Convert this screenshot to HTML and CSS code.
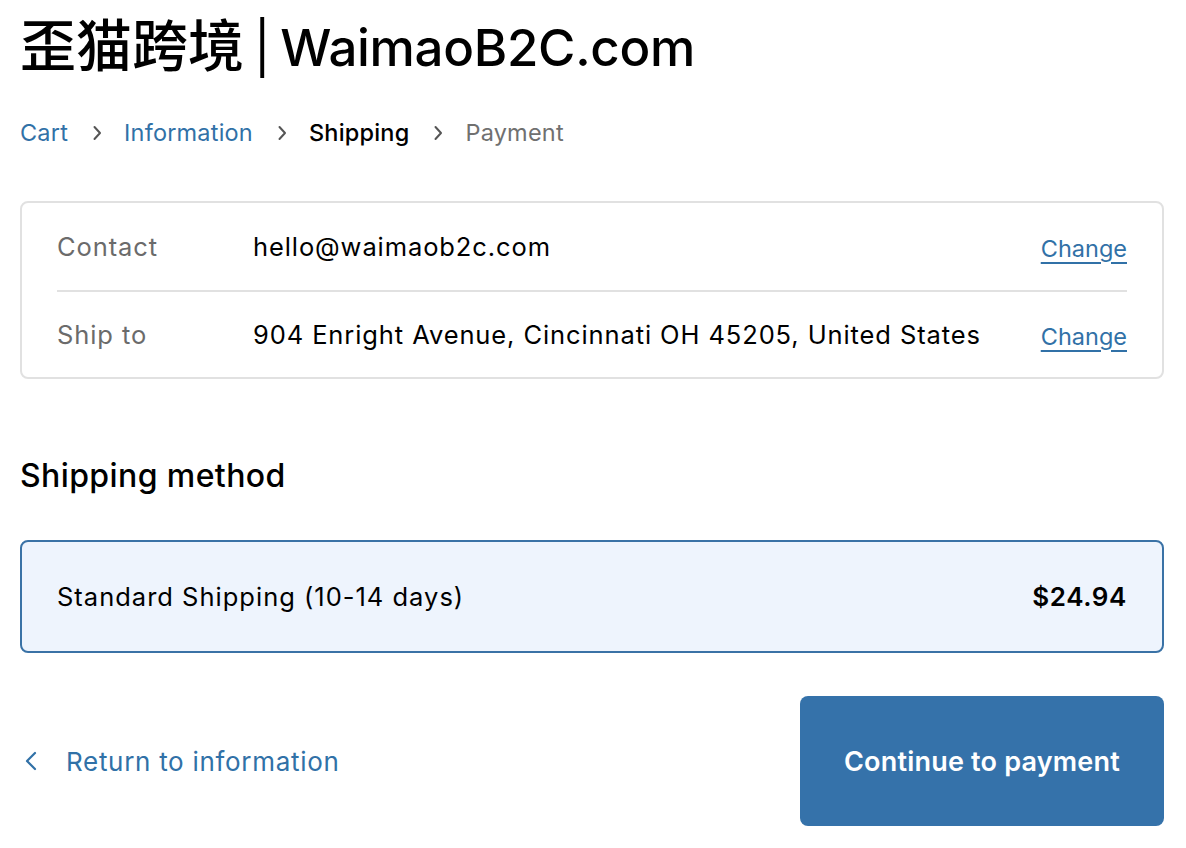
FILE: index.html
```html
<!DOCTYPE html>
<html lang="en">
<head>
<meta charset="utf-8">
<title>Shipping</title>
<link rel="stylesheet" href="styles.css">
</head>
<body>
<main class="page">
  <h1 class="title"><span class="title-cjk">歪猫跨境</span> <span class="title-pipe">|</span> WaimaoB2C.com</h1>
  <nav class="crumbs">
    <a class="crumb link" href="#">Cart</a>
    <svg class="sep" viewBox="0 0 10 16"><path d="M2.5 2l5.5 6-5.5 6" fill="none" stroke="currentColor" stroke-width="2" stroke-linecap="round" stroke-linejoin="round"/></svg>
    <a class="crumb link" href="#">Information</a>
    <svg class="sep" viewBox="0 0 10 16"><path d="M2.5 2l5.5 6-5.5 6" fill="none" stroke="currentColor" stroke-width="2" stroke-linecap="round" stroke-linejoin="round"/></svg>
    <span class="crumb current">Shipping</span>
    <svg class="sep" viewBox="0 0 10 16"><path d="M2.5 2l5.5 6-5.5 6" fill="none" stroke="currentColor" stroke-width="2" stroke-linecap="round" stroke-linejoin="round"/></svg>
    <span class="crumb muted">Payment</span>
  </nav>

  <section class="review">
    <div class="row">
      <span class="label">Contact</span>
      <span class="value">hello@waimaob2c.com</span>
      <a class="change" href="#">Change</a>
    </div>
    <div class="row">
      <span class="label">Ship to</span>
      <span class="value">904 Enright Avenue, Cincinnati OH 45205, United States</span>
      <a class="change" href="#">Change</a>
    </div>
  </section>

  <h2 class="heading">Shipping method</h2>

  <div class="method">
    <span class="method-name">Standard Shipping (10-14 days)</span>
    <span class="price">$24.94</span>
  </div>

  <div class="actions">
    <a class="back" href="#">
      <svg class="back-icon" viewBox="0 0 14 20"><path d="M11 2L3 10l8 8" fill="none" stroke="currentColor" stroke-width="2.2" stroke-linecap="round" stroke-linejoin="round"/></svg>
      <span>Return to information</span>
    </a>
    <button class="continue" type="button">Continue to payment</button>
  </div>
</main>
</body>
</html>
```

FILE: styles.css
```css
* { box-sizing: border-box; }
html, body { margin: 0; padding: 0; background: #fff; }
body {
  font-family: Inter, "Noto Sans CJK SC", "Noto Sans", sans-serif;
  color: #000;
}
.page {
  padding: 10px 22px 20px 20px;
}
.title {
  margin: 0;
  font-size: 51px;
  font-weight: 500;
  line-height: 72px;
  letter-spacing: -0.3px;
  word-spacing: -3.5px;
}
.title-cjk {
  font-size: 56px;
  letter-spacing: 0;
}
.title-pipe {
  font-weight: 400;
}
.crumbs {
  display: flex;
  align-items: center;
  margin-top: 31px;
  font-size: 23.5px;
  letter-spacing: 0.2px;
  line-height: 36px;
}
.crumb { text-decoration: none; }
.link { color: #3171a7; }
.current { color: #000; font-weight: 500; }
.muted { color: #707070; }
.sep {
  width: 10px;
  height: 16px;
  margin: 0 22px 0 24px;
  color: #555;
}
.review {
  margin-top: 50px;
  border: 2px solid #e1e1e1;
  border-radius: 8px;
  padding: 0 35px;
}
.row {
  display: flex;
  align-items: center;
  height: 87px;
  font-size: 25.5px;
  letter-spacing: 0.9px;
}
.row + .row { border-top: 2px solid #e1e1e1; }
.label { width: 196px; color: #6b6b6b; flex: none; }
.value { flex: 1; color: #000; }
.change {
  color: #3171a7;
  text-decoration: underline;
  text-underline-offset: 5px;
  text-decoration-thickness: 2px;
  font-size: 23.5px;
  letter-spacing: 0;
  margin-top: 3px;
}
.heading {
  margin: 76px 0 0;
  font-size: 32px;
  font-weight: 500;
  letter-spacing: 0.4px;
  line-height: 42px;
}
.method {
  margin-top: 43px;
  display: flex;
  justify-content: space-between;
  align-items: center;
  height: 113px;
  padding: 0 35px;
  background: #eef4fd;
  border: 2px solid #3a72a6;
  border-radius: 8px;
  font-size: 25.5px;
  letter-spacing: 1px;
}
.price { font-weight: 600; font-size: 26px; letter-spacing: 0.6px; }
.actions {
  margin-top: 43px;
  display: flex;
  justify-content: space-between;
  align-items: center;
}
.back {
  display: flex;
  align-items: center;
  color: #3171a7;
  text-decoration: none;
  font-size: 26px;
  letter-spacing: 0.7px;
  padding-left: 4px;
}
.back-icon { width: 14px; height: 20px; margin-right: 28px; }
.continue {
  width: 364px;
  height: 130px;
  border: none;
  border-radius: 8px;
  background: #3572aa;
  color: #fff;
  font-family: inherit;
  font-size: 27px;
  letter-spacing: 0.2px;
  font-weight: 600;
}
```
